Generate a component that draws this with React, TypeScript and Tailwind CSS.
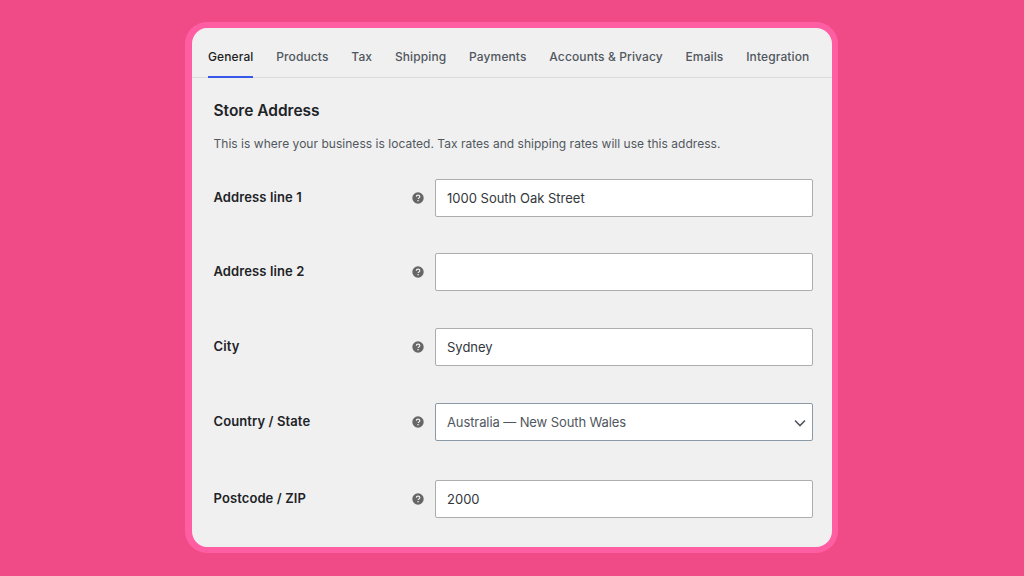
import React from "react";

const tabs = ["General", "Products", "Tax", "Shipping", "Payments", "Accounts & Privacy", "Emails", "Integration"];

function HelpIcon() {
  return (
    <svg width="12" height="12" viewBox="0 0 12 12" className="shrink-0">
      <circle cx="6" cy="6" r="5.7" fill="#666666" />
      <path d="M4.3 4.7c0-1 .8-1.6 1.8-1.6s1.7.6 1.7 1.5c0 .7-.4 1-.9 1.3-.5.3-.8.5-.8 1.1" fill="none" stroke="#f0f0f0" strokeWidth="1.2" />
      <rect x="5.4" y="8" width="1.3" height="1.3" fill="#f0f0f0" />
    </svg>
  );
}

function Row({ label, value, select, className }: { label: string; value?: string; select?: boolean; className: string }) {
  return (
    <div className={`flex ${className}`}>
      <div className="w-[198.5px] pt-[9px] text-[13px] leading-[18px] font-semibold tracking-[0.1px] text-[#1d2327]">{label}</div>
      <div className="w-[23px] pt-[13px]">
        <HelpIcon />
      </div>
      <div
        className={`relative flex h-[38px] w-[378px] items-center rounded-[2px] border bg-white pl-[11px] pt-[2px] text-[13px] ${
          select ? "border-[#8c9aa8] tracking-[-0.1px] text-[#50575e]" : "border-[#adadad] text-[#32373c]"
        }`}
      >
        {value}
        {select && (
          <svg width="12" height="8" viewBox="0 0 12 8" className="absolute right-[6px] top-[15px]">
            <path d="M1 1.5l5 5 5-5" fill="none" stroke="#50575e" strokeWidth="1.6" />
          </svg>
        )}
      </div>
    </div>
  );
}

export default function App() {
  return (
    <div className="flex h-[576px] w-[1024px] items-start justify-center overflow-hidden bg-[#f04b87] pr-px pt-[22px] font-['Inter',sans-serif]">
      <div className="h-[531px] w-[653px] rounded-[22px] border-[6px] border-l-[7px] border-[#ff5fa2] bg-[#f0f0f0]">
        <div className="flex h-[50px] gap-[22.8px] border-b border-[#dcdcde] pl-4">
          {tabs.map((tab, i) => (
            <div
              key={tab}
              className={`h-[50px] whitespace-nowrap pt-[20px] text-[12px] leading-[18px] font-medium tracking-[0.11px] ${
                i === 0 ? "border-b-2 border-[#3858e9] text-[#1e1e1e]" : "text-[#50575e]"
              }`}
            >
              {tab}
            </div>
          ))}
        </div>
        <div className="pl-[21.5px] pt-[22px]">
          <h2 className="text-[15.5px] leading-[22px] font-semibold text-[#1d2327]">Store Address</h2>
          <p className="mt-[13px] text-[12px] leading-[18px] tracking-[0.03px] text-[#50575e]">
            This is where your business is located. Tax rates and shipping rates will use this address.
          </p>
          <Row className="mt-[26px]" label="Address line 1" value="1000 South Oak Street" />
          <Row className="mt-[36px]" label="Address line 2" />
          <Row className="mt-[37px]" label="City" value="Sydney" />
          <Row className="mt-[37px]" label="Country / State" value="Australia — New South Wales" select />
          <Row className="mt-[39px]" label="Postcode / ZIP" value="2000" />
        </div>
      </div>
    </div>
  );
}
